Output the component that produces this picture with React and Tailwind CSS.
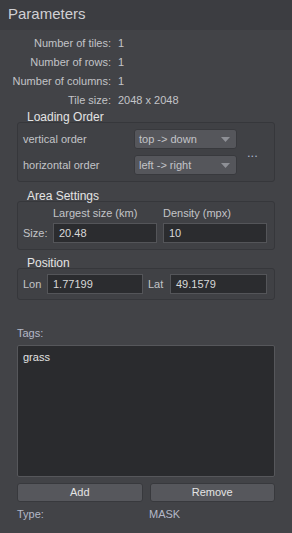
import React from "react";

const InfoRow = ({ label, value }) => (
  <div className="flex h-[19px] items-center whitespace-nowrap">
    <span className="w-[111px] text-right">{label}</span>
    <span className="ml-[7px]">{value}</span>
  </div>
);

const Group = ({ title, children, className }) => (
  <div className={"relative mx-[17px] " + (className || "")}>
    <div className="absolute left-[10px] top-[-14px] text-[12px] text-[#e4e4e4]">{title}</div>
    <div className="rounded-[3px] border border-[#36373b] bg-[#404145]">{children}</div>
  </div>
);

const Select = ({ value }) => (
  <div className="flex h-[20px] w-[103px] items-center justify-between rounded-[3px] border border-[#38393d] bg-[#55565b] pl-[4px] pr-[6px]">
    <span>{value}</span>
    <svg width="9" height="5" viewBox="0 0 9 5">
      <path d="M0 0 H9 L4.5 5 Z" fill="#8e9096" />
    </svg>
  </div>
);

const Input = ({ value, width }) => (
  <div className={"flex h-[20px] items-center border border-[#545559] bg-[#2b2c2f] pl-[5px] text-[#d8d8d8] " + width}>
    {value}
  </div>
);

export default function App() {
  return (
    <div
      className="flex h-[533px] w-[292px] flex-col bg-[#424347] text-[11px] text-[#c3c4c8]"
      style={{ fontFamily: '"Liberation Sans", Arial, sans-serif' }}
    >
      <div className="h-[30px] bg-[#3c3d41] pl-[8px] pt-[3px] text-[15px] text-[#d0d0d4]">Parameters</div>

      <div className="mt-[4px] flex flex-col">
        <InfoRow label="Number of tiles:" value="1" />
        <InfoRow label="Number of rows:" value="1" />
        <InfoRow label="Number of columns:" value="1" />
        <InfoRow label="Tile size:" value="2048 x 2048" />
      </div>

      <Group title="Loading Order" className="mt-[12px]">
        <div className="flex items-center py-[6px] pl-[5px]">
          <div className="flex flex-col gap-[6px]">
            <div className="flex items-center">
              <span className="w-[111px]">vertical order</span>
              <Select value="top -> down" />
            </div>
            <div className="flex items-center">
              <span className="w-[111px]">horizontal order</span>
              <Select value="left -> right" />
            </div>
          </div>
          <span className="ml-[10px] text-[13px] leading-none text-[#a9b4cc]">...</span>
        </div>
      </Group>

      <Group title="Area Settings" className="mt-[19px]">
        <div className="flex flex-col pb-[6px] pt-[2px]">
          <div className="flex h-[19px] items-center">
            <span className="ml-[35px] w-[110px]">Largest size (km)</span>
            <span>Density (mpx)</span>
          </div>
          <div className="flex items-center">
            <span className="ml-[5px] w-[30px]">Size:</span>
            <Input value="20.48" width="w-[104px]" />
            <div className="w-[6px]" />
            <Input value="10" width="w-[104px]" />
          </div>
        </div>
      </Group>

      <Group title="Position" className="mt-[18px]">
        <div className="flex items-center py-[5px]">
          <span className="ml-[5px] w-[24px]">Lon</span>
          <Input value="1.77199" width="w-[96px]" />
          <span className="ml-[5px] w-[22px]">Lat</span>
          <Input value="49.1579" width="w-[97px]" />
        </div>
      </Group>

      <div className="mx-[17px] mt-[25px] text-[#b4b8c8]">Tags:</div>
      <div className="mx-[17px] mt-[3px] h-[132px] rounded-[2px] border border-[#56575b] bg-[#2a2b2e] pl-[5px] pt-[3px] text-[#e2e2e2]">
        grass
      </div>

      <div className="mx-[17px] mt-[6px] flex gap-[7px]">
        <div className="flex h-[19px] flex-1 items-center justify-center rounded-[3px] border border-[#38393d] bg-[#56575c] text-[#e4e4e4]">Add</div>
        <div className="flex h-[19px] flex-1 items-center justify-center rounded-[3px] border border-[#38393d] bg-[#56575c] text-[#e4e4e4]">Remove</div>
      </div>

      <div className="mx-[17px] mt-[4px] flex text-[#b4b8c8]">
        <span className="w-[132px]">Type:</span>
        <span>MASK</span>
      </div>
    </div>
  );
}
